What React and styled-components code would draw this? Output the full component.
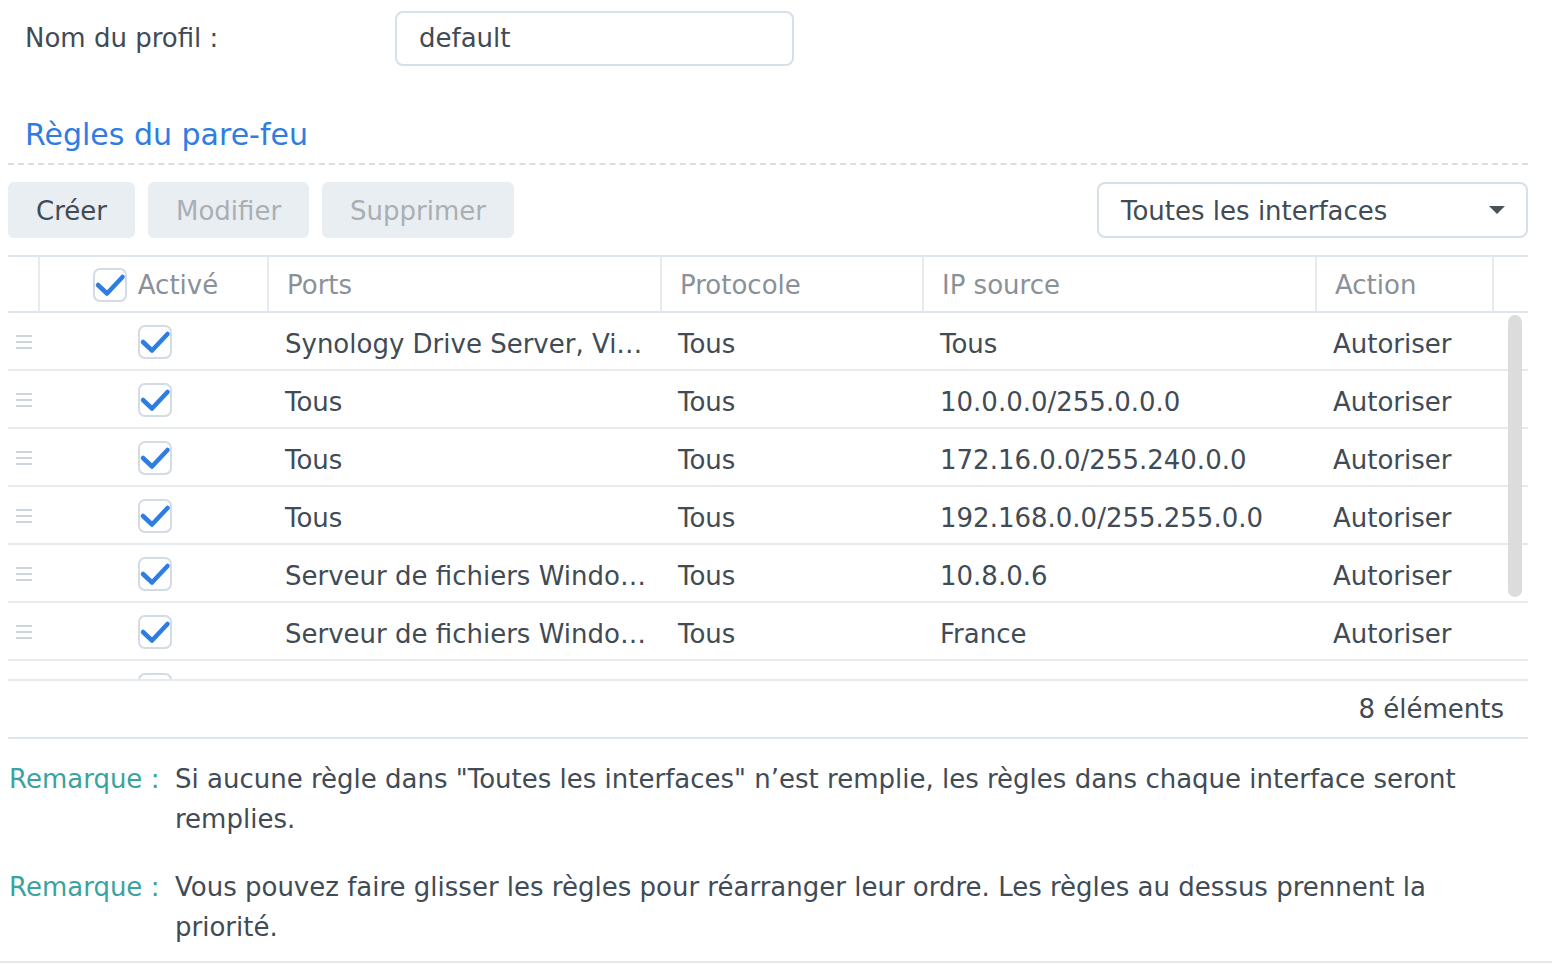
import React from 'react';
import styled, { createGlobalStyle } from 'styled-components';

const Global = createGlobalStyle`
  html, body {
    margin: 0;
    padding: 0;
    background: #ffffff;
  }
  body {
    font-family: "DejaVu Sans", Verdana, sans-serif;
    font-size: 26px;
    color: #414b55;
  }
`;

const Page = styled.div`
  width: 1552px;
  height: 964px;
  overflow: hidden;
  display: flex;
  flex-direction: column;
`;

const ProfileRow = styled.div`
  display: flex;
  align-items: center;
  padding: 11px 0 0 25px;
  height: 54px;
`;

const Label = styled.div`
  width: 370px;
  color: #414b55;
`;

const TextInput = styled.div`
  box-sizing: border-box;
  width: 399px;
  height: 55px;
  border: 2px solid #d7dfe8;
  border-radius: 8px;
  padding: 0 22px;
  display: flex;
  align-items: center;
`;

const SectionTitle = styled.div`
  margin-top: 50px;
  padding-left: 25px;
  font-size: 30px;
  color: #2f7de1;
  line-height: 40px;
`;

const Dashed = styled.div`
  margin: 8px 24px 0 8px;
  height: 0;
  border-top: 2px dashed #d8dee5;
`;

const Toolbar = styled.div`
  display: flex;
  align-items: center;
  gap: 13px;
  margin: 17px 24px 0 8px;
  height: 56px;
`;

const Button = styled.div`
  box-sizing: border-box;
  height: 56px;
  padding: 2px 28px 0;
  display: flex;
  align-items: center;
  border-radius: 6px;
  background: #e9eef2;
  color: ${p => (p.disabled ? '#a9afb5' : '#414b55')};
`;

const Select = styled.div`
  margin-left: auto;
  box-sizing: border-box;
  width: 431px;
  height: 56px;
  border: 2px solid #d7dfe8;
  border-radius: 8px;
  padding: 2px 22px 0;
  display: flex;
  align-items: center;
  justify-content: space-between;
`;

const Caret = styled.span`
  width: 0;
  height: 0;
  border-left: 8px solid transparent;
  border-right: 8px solid transparent;
  border-top: 8px solid #4a5159;
  margin: -2px -1px 0 0;
`;

const Table = styled.div`
  margin: 17px 24px 0 8px;
  position: relative;
`;

const cols = '32px 229px 393px 262px 393px 177px 34px';

const HeadRow = styled.div`
  display: grid;
  grid-template-columns: ${cols};
  height: 58px;
  box-sizing: border-box;
  border-top: 2px solid #dfe5ec;
  border-bottom: 2px solid #dfe5ec;
  color: #8a9198;
`;

const HeadCell = styled.div`
  display: flex;
  align-items: center;
  justify-content: ${p => (p.center ? 'center' : 'flex-start')};
  gap: 11px;
  padding: 2px 0 0 ${p => (p.center ? '4px' : '18px')};
  border-right: ${p => (p.last ? 'none' : '2px solid #e6ebf0')};
`;

const Body = styled.div`
  position: relative;
  height: 366px;
  overflow: hidden;
`;

const Row = styled.div`
  display: grid;
  grid-template-columns: ${cols};
  height: 58px;
  box-sizing: border-box;
  border-bottom: 2px solid #e6eaee;
`;

const Cell = styled.div`
  display: flex;
  align-items: center;
  justify-content: ${p => (p.center ? 'center' : 'flex-start')};
  padding: ${p => (p.center ? '2px 0 0 0' : '5px 0 0 16px')};
  white-space: nowrap;
  overflow: hidden;
`;

const Handle = styled.div`
  display: flex;
  flex-direction: column;
  gap: 4px;
  padding: 2px 0 0 8px;
  justify-content: center;
  span {
    display: block;
    width: 16px;
    height: 2px;
    background: #cfd5dc;
  }
`;

const Thumb = styled.div`
  position: absolute;
  right: 6px;
  top: 2px;
  width: 14px;
  height: 282px;
  border-radius: 7px;
  background: #dcdcdc;
`;

const Footer = styled.div`
  box-sizing: border-box;
  height: 60px;
  border-top: 2px solid #e6eaee;
  border-bottom: 2px solid #dfe5ec;
  display: flex;
  align-items: center;
  justify-content: flex-end;
  padding-right: 24px;
`;

const Notes = styled.div`
  padding: 20px 0 0 9px;
  display: flex;
  flex-direction: column;
  gap: 28px;
  flex: 1;
`;

const Note = styled.div`
  display: flex;
  line-height: 40px;
`;

const NoteLabel = styled.div`
  flex: 0 0 166px;
  color: #3aa39f;
  white-space: nowrap;
`;

const NoteText = styled.div`
  width: 1320px;
`;

const BottomRule = styled.div`
  height: 2px;
  background: #e3e8ed;
  margin-bottom: 1px;
`;

const BoxFrame = styled.div`
  box-sizing: border-box;
  width: 34px;
  height: 34px;
  border: 2px solid #d3dbe4;
  border-radius: 7px;
  background: #fff;
  display: flex;
  align-items: center;
  justify-content: center;
`;

const Check = ({ on = true }) => (
  <BoxFrame>
    {on && (
      <svg width="34" height="34" viewBox="0 0 34 34" style={{ margin: -2 }}>
        <path d="M5 17 L14 25.5 L29.5 9" fill="none" stroke="#2f7de1" strokeWidth="4.5" strokeLinecap="round" strokeLinejoin="round" />
      </svg>
    )}
  </BoxFrame>
);

const rules = [
  ['Synology Drive Server, Vi…', 'Tous', 'Tous', 'Autoriser'],
  ['Tous', 'Tous', '10.0.0.0/255.0.0.0', 'Autoriser'],
  ['Tous', 'Tous', '172.16.0.0/255.240.0.0', 'Autoriser'],
  ['Tous', 'Tous', '192.168.0.0/255.255.0.0', 'Autoriser'],
  ['Serveur de fichiers Windo…', 'Tous', '10.8.0.6', 'Autoriser'],
  ['Serveur de fichiers Windo…', 'Tous', 'France', 'Autoriser'],
  ['', '', '', ''],
];

export default function App() {
  return (
    <Page>
      <Global />
      <ProfileRow>
        <Label>Nom du profil :</Label>
        <TextInput>default</TextInput>
      </ProfileRow>
      <SectionTitle>Règles du pare-feu</SectionTitle>
      <Dashed />
      <Toolbar>
        <Button>Créer</Button>
        <Button disabled>Modifier</Button>
        <Button disabled>Supprimer</Button>
        <Select>
          <span>Toutes les interfaces</span>
          <Caret />
        </Select>
      </Toolbar>
      <Table>
        <HeadRow>
          <HeadCell />
          <HeadCell center>
            <Check />
            <span>Activé</span>
          </HeadCell>
          <HeadCell>Ports</HeadCell>
          <HeadCell>Protocole</HeadCell>
          <HeadCell>IP source</HeadCell>
          <HeadCell>Action</HeadCell>
          <HeadCell last />
        </HeadRow>
        <Body>
          {rules.map((r, i) => (
            <Row key={i}>
              <Handle>
                <span />
                <span />
                <span />
              </Handle>
              <Cell center>
                <Check />
              </Cell>
              <Cell>{r[0]}</Cell>
              <Cell>{r[1]}</Cell>
              <Cell>{r[2]}</Cell>
              <Cell>{r[3]}</Cell>
              <Cell />
            </Row>
          ))}
          <Thumb />
        </Body>
        <Footer>8 éléments</Footer>
      </Table>
      <Notes>
        <Note>
          <NoteLabel>Remarque :</NoteLabel>
          <NoteText>
            Si aucune règle dans "Toutes les interfaces" n’est remplie, les règles dans chaque interface seront remplies.
          </NoteText>
        </Note>
        <Note>
          <NoteLabel>Remarque :</NoteLabel>
          <NoteText>
            Vous pouvez faire glisser les règles pour réarranger leur ordre. Les règles au dessus prennent la priorité.
          </NoteText>
        </Note>
      </Notes>
      <BottomRule />
    </Page>
  );
}
